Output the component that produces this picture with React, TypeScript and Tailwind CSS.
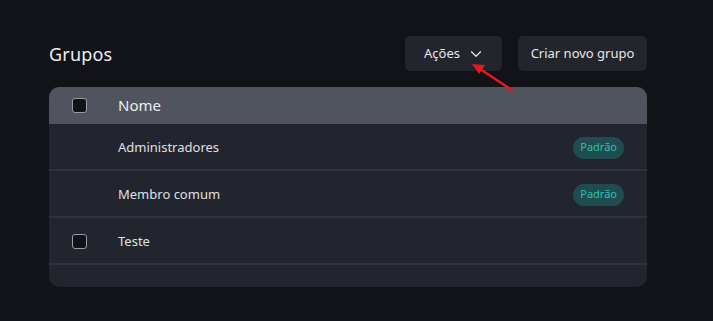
import { ChevronDown } from "lucide-react";

const groups = [
  { id: 1, name: "Administradores", isDefault: true },
  { id: 2, name: "Membro comum", isDefault: true },
  { id: 3, name: "Teste", isDefault: false },
];

const Checkbox = () => (
  <span className="block h-[15px] w-[15px] rounded-[3px] border border-[#9a9ca4] bg-[#121318]" />
);

export default function App() {
  return (
    <div
      className="relative h-[321px] w-[713px] bg-[#121318] text-[#e4e5e9]"
      style={{ fontFamily: '"Noto Sans", "Open Sans", sans-serif' }}
    >
      <div className="flex w-[647px] flex-col pt-[36px] pl-[49px]">
        <div className="flex items-center justify-between">
          <h1 className="text-[18px] leading-none font-normal tracking-[0.2px] text-[#eceef2]">
            Grupos
          </h1>
          <div className="flex gap-4">
            <button className="flex h-[35px] w-[97px] items-center gap-[7px] rounded-[5px] bg-[#23252d] pl-[19px] text-[13px] text-[#e6e7eb]">
              Ações
              <ChevronDown size={18} strokeWidth={1.6} />
            </button>
            <button className="flex h-[35px] w-[129px] items-center justify-center rounded-[5px] bg-[#23252d] text-[13px] text-[#e6e7eb]">
              Criar novo grupo
            </button>
          </div>
        </div>

        <div className="mt-[16px] overflow-hidden rounded-[10px] bg-[#23252e]">
          <div className="flex h-[37px] items-center bg-[#50545f] px-[23px]">
            <Checkbox />
            <span className="ml-[31px] text-[15px] text-[#eceef2]">Nome</span>
          </div>
          {groups.map((g) => (
            <div
              key={g.id}
              className="flex h-[47px] items-center border-b-2 border-[#31333c] px-[23px] pt-[2px]"
            >
              <span className="w-[15px]">{g.isDefault ? null : <Checkbox />}</span>
              <span className="ml-[31px] text-[13px] text-[#dfe0e5]">{g.name}</span>
              {g.isDefault ? (
                <span className="ml-auto flex h-[22px] items-center rounded-full bg-[#1e4c50] px-[7px] text-[11px] text-[#2cc2ad]">
                  Padrão
                </span>
              ) : null}
            </div>
          ))}
          <div className="h-[22px]" />
        </div>
      </div>

      <svg
        className="absolute top-0 left-0"
        width="713"
        height="321"
        viewBox="0 0 713 321"
      >
        <line x1="512" y1="90" x2="480" y2="69" stroke="#e8191c" strokeWidth="2.5" strokeLinecap="round" />
        <path d="M472 64 L485 65 L479 74 Z" fill="#e8191c" />
      </svg>
    </div>
  );
}
